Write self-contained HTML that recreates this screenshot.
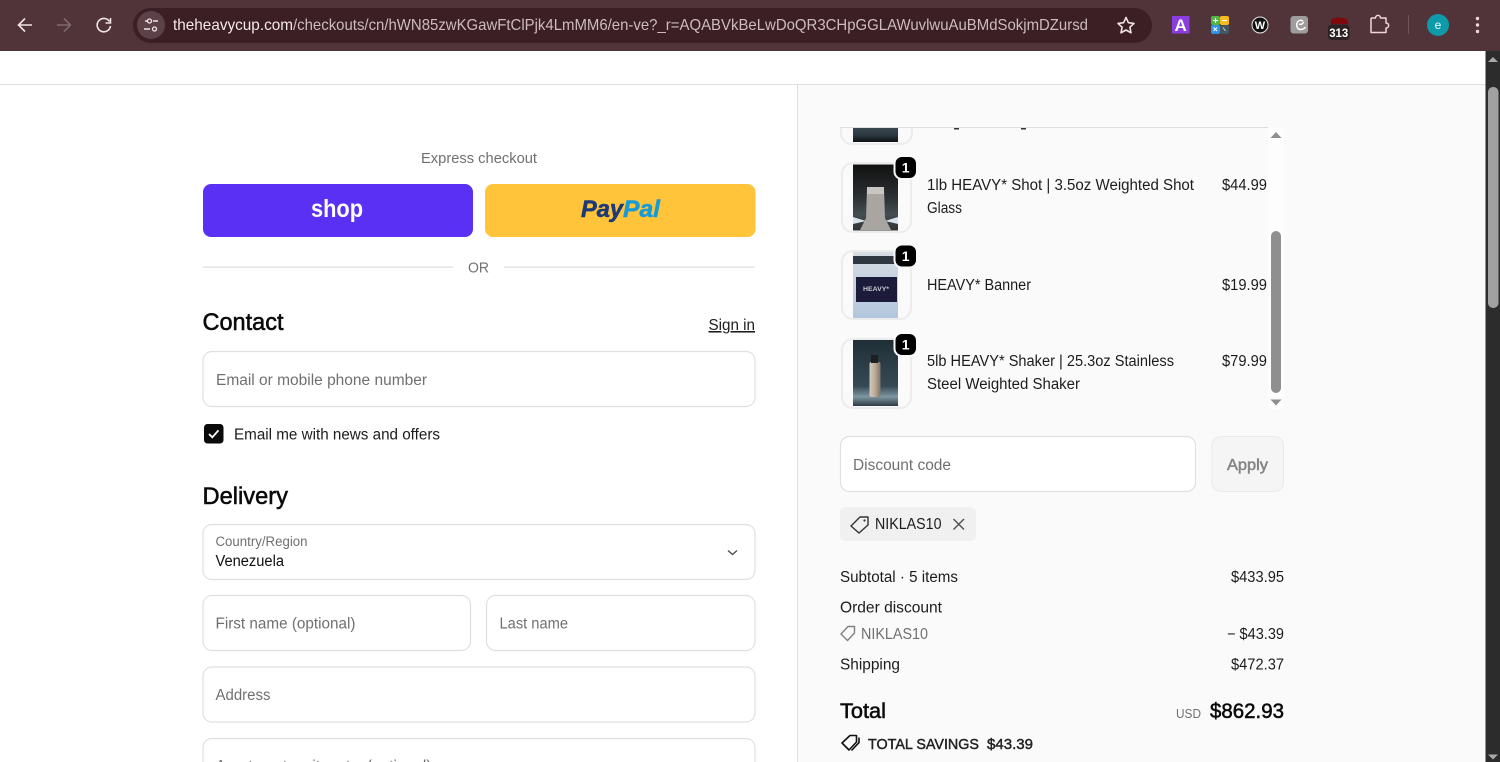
<!DOCTYPE html>
<html lang="en"><head><meta charset="utf-8"><title>Checkout</title>
<style>
html,body{margin:0;padding:0;width:1500px;height:762px;overflow:hidden;background:#fff}
svg{display:block}
text{font-family:"Liberation Sans",sans-serif;font-size:15.500px;fill:#1c1c1c;white-space:pre}
.g{fill:#707070}
.b{fill:#0a0a0a;stroke:#0a0a0a;stroke-width:.55px}
.f{fill:#fff;stroke:#e0e0e0;stroke-width:1.200}
</style></head><body>
<svg width="1500" height="762" viewBox="0 0 1500 762" xmlns="http://www.w3.org/2000/svg">
<defs>
<linearGradient id="i1" x1="0" y1="0" x2="0" y2="1"><stop offset="0" stop-color="#111"/><stop offset=".5" stop-color="#2b3033"/><stop offset=".75" stop-color="#454d52"/><stop offset="1" stop-color="#2f3336"/></linearGradient>
<linearGradient id="i2" x1="0" y1="0" x2="0" y2="1"><stop offset="0" stop-color="#d6dce2"/><stop offset="1" stop-color="#b2c7de"/></linearGradient>
<linearGradient id="i3" x1="0" y1="0" x2="0" y2="1"><stop offset="0" stop-color="#1f2e36"/><stop offset=".7" stop-color="#364a54"/><stop offset=".86" stop-color="#7f97a2"/><stop offset="1" stop-color="#2c3a42"/></linearGradient>
<linearGradient id="i0" x1="0" y1="0" x2="0" y2="1"><stop offset="0" stop-color="#4a5a62"/><stop offset=".7" stop-color="#2d3a41"/><stop offset="1" stop-color="#0e1214"/></linearGradient>
<linearGradient id="s" x1="0" y1="0" x2="1" y2="0"><stop offset="0" stop-color="#d0cbc4"/><stop offset=".5" stop-color="#bcaa94"/><stop offset="1" stop-color="#7e7468"/></linearGradient>
</defs>

<!-- page -->
<rect width="1500" height="762" fill="#fff"/>
<rect x="798" y="85" width="688" height="677" fill="#fafafa"/>
<rect x="0" y="84" width="1486" height="1" fill="#dedede"/>
<rect x="797" y="85" width="1" height="677" fill="#dedede"/>

<!-- browser toolbar -->
<rect width="1500" height="51" fill="#50343a"/>
<path d="M32 25H19M25 18.500l-6.500 6.500 6.500 6.500" fill="none" stroke="#f0e4e6" stroke-width="1.600"/>
<path d="M57 25H70M64 18.500l6.500 6.500-6.500 6.500" fill="none" stroke="#7f686c" stroke-width="1.600"/>
<path d="M109.500 21.500A6.700 6.700 0 1 0 110.500 26M110.500 18v5h-5" fill="none" stroke="#f0e4e6" stroke-width="1.600"/>
<rect x="133" y="8" width="1019" height="35" rx="17.500" fill="#3b1f25"/>
<circle cx="151" cy="25" r="14" fill="#5c4248"/>
<path d="M145 21h2M153 21h5M144 29h6" stroke="#f0e4e6" stroke-width="1.500" fill="none"/>
<circle cx="149.500" cy="21" r="2" fill="none" stroke="#f0e4e6" stroke-width="1.300"/>
<circle cx="154.500" cy="29" r="2" fill="none" stroke="#f0e4e6" stroke-width="1.300"/>
<text x="173" y="30" textLength="120" lengthAdjust="spacingAndGlyphs" style="fill:#f3e8ea;font-size:16px">theheavycup.com</text>
<text x="293" y="30" textLength="795" lengthAdjust="spacingAndGlyphs" style="fill:#cdbcbf;font-size:16px">/checkouts/cn/hWN85zwKGawFtClPjk4LmMM6/en-ve?_r=AQABVkBeLwDoQR3CHpGGLAWuvlwuAuBMdSokjmDZursd</text>
<path d="M1126 17.500l2.400 5.200 5.600.700-4.100 3.800 1.100 5.600-5-2.800-5 2.800 1.100-5.600-4.100-3.800 5.600-.700z" fill="none" stroke="#f0e4e6" stroke-width="1.600" stroke-linejoin="round"/>

<rect x="1172" y="16" width="17.500" height="17.500" fill="#8b3ee0"/>
<text x="1180.700" y="31" text-anchor="middle" style="font-size:17px;font-weight:700;fill:#fff">A</text>
<rect x="1211" y="16" width="9" height="9" rx="2" fill="#54b447"/><rect x="1220" y="16" width="9" height="9" rx="2" fill="#f9bb1c"/>
<rect x="1211" y="25" width="9" height="9" rx="2" fill="#2f93e6"/><rect x="1220" y="25" width="9" height="9" rx="2" fill="#45565e"/>
<path d="M1213 20.500h5M1215.500 18v5M1222 20.500h5M1213.500 27.500l3.500 3.500M1217 27.500l-3.500 3.500" stroke="#fff" stroke-width="1.100"/>
<path d="M1223 27.500l2.500 3.500" stroke="#c7d2d6" stroke-width="1"/>
<circle cx="1260" cy="25" r="8" fill="#111" stroke="#e8e8e8" stroke-width="1"/>
<text x="1260" y="29" text-anchor="middle" style="font-size:11px;font-weight:700;fill:#fff">W</text>
<rect x="1290.500" y="16" width="17.500" height="17.500" rx="3" fill="#9d9d9d"/>
<path d="M1303 21.500c-1-2-5-1.500-6 1.500s.5 6.500 3.500 6.500 4-1 5-2.500M1299 24c2 .8 4 0 4.500-2" fill="none" stroke="#fff" stroke-width="1.400"/>
<path d="M1331 24v-2.500c0-2.500 1.500-3.500 4-3.500h1c1-1.500 3-1.500 4 0h3c3 0 5 1 5 3.500v2.500z" fill="#7e0a10"/>
<rect x="1328" y="24.500" width="21.500" height="15.500" rx="4" fill="#2c2224"/>
<text x="1338.700" y="37" text-anchor="middle" textLength="19" lengthAdjust="spacingAndGlyphs" style="font-size:11.500px;font-weight:700;fill:#fff">313</text>
<path d="M1372 18h4.500c0-3.500 5-3.500 5 0h5.500v5c3.500 0 3.500 5 0 5v4.500h-15v-4.500" fill="none" stroke="#eed6da" stroke-width="1.500" stroke-linejoin="round" transform="translate(-1 0)"/>
<path d="M1371 18v10" stroke="#eed6da" stroke-width="1.500"/>
<rect x="1408" y="15" width="1" height="19" fill="#6f5459"/>
<circle cx="1438" cy="25" r="11" fill="#0e9aa9"/>
<text x="1438" y="29" text-anchor="middle" style="font-size:12px;fill:#eafcff">e</text>
<circle cx="1477.500" cy="18.500" r="1.700" fill="#eed6da"/><circle cx="1477.500" cy="25" r="1.700" fill="#eed6da"/><circle cx="1477.500" cy="31.500" r="1.700" fill="#eed6da"/>

<!-- page scrollbar -->
<rect x="1485.500" y="51" width="14.500" height="711" fill="#2c2c2c"/>
<path d="M1493 57l5 5h-10z" fill="#a8a8a8"/>
<path d="M1493 759.500l5-5h-10z" fill="#a8a8a8"/>
<rect x="1488" y="87" width="10.500" height="221" rx="5" fill="#a1a1a1"/>

<!-- express -->
<text x="421" y="163" textLength="116" lengthAdjust="spacingAndGlyphs" class="g" style="font-size:15px">Express checkout</text>
<rect x="203" y="184" width="270" height="53" rx="8" fill="#5a31f4"/>
<text x="311" y="217" textLength="52" lengthAdjust="spacingAndGlyphs" style="font-size:25px;font-weight:700;fill:#fff">shop</text>
<rect x="485" y="184" width="270.500" height="53" rx="8" fill="#ffc439"/>
<text x="581" y="217" textLength="42" lengthAdjust="spacingAndGlyphs" style="font-size:24px;font-weight:700;font-style:italic;fill:#1c3a78;stroke:#1c3a78;stroke-width:.5px">Pay</text>
<text x="623" y="217" textLength="37" lengthAdjust="spacingAndGlyphs" style="font-size:24px;font-weight:700;font-style:italic;fill:#179bd7;stroke:#179bd7;stroke-width:.5px">Pal</text>
<rect x="203" y="266.500" width="250" height="1.200" fill="#dedede"/>
<rect x="504" y="266.500" width="251" height="1.200" fill="#dedede"/>
<text x="468" y="272.500" textLength="21" lengthAdjust="spacingAndGlyphs" class="g" style="font-size:15px">OR</text>

<!-- contact -->
<text x="202.500" y="330" textLength="81" lengthAdjust="spacingAndGlyphs" class="b" style="font-size:24px">Contact</text>
<text x="708.500" y="330" textLength="46.500" lengthAdjust="spacingAndGlyphs" style="text-decoration:underline">Sign in</text>
<rect class="f" x="203" y="351.500" width="552" height="55" rx="9"/>
<text x="216" y="385" textLength="211" lengthAdjust="spacingAndGlyphs" class="g">Email or mobile phone number</text>
<rect x="204" y="424" width="19.500" height="19.500" rx="3.500" fill="#0a0a0a"/>
<path d="M209 434l3.300 3.300 6.200-7" fill="none" stroke="#fff" stroke-width="1.800"/>
<text x="234" y="439.500" textLength="206" lengthAdjust="spacingAndGlyphs">Email me with news and offers</text>

<!-- delivery -->
<text x="202.500" y="504" textLength="85.500" lengthAdjust="spacingAndGlyphs" class="b" style="font-size:24px">Delivery</text>
<rect class="f" x="203" y="524.500" width="552" height="55" rx="9"/>
<text x="215.500" y="546" textLength="92" lengthAdjust="spacingAndGlyphs" class="g" style="font-size:13.500px">Country/Region</text>
<text x="215.500" y="566" textLength="68.500" lengthAdjust="spacingAndGlyphs" style="fill:#0f0f0f">Venezuela</text>
<path d="M728 550.500l4.500 4 4.500-4" fill="none" stroke="#555" stroke-width="1.500"/>
<rect class="f" x="203" y="595.500" width="267.500" height="55" rx="9"/>
<text x="215.500" y="628.500" textLength="140" lengthAdjust="spacingAndGlyphs" class="g">First name (optional)</text>
<rect class="f" x="486.500" y="595.500" width="268.500" height="55" rx="9"/>
<text x="499.500" y="628.500" textLength="68.500" lengthAdjust="spacingAndGlyphs" class="g">Last name</text>
<rect class="f" x="203" y="667" width="552" height="55" rx="9"/>
<text x="215.500" y="700" textLength="55" lengthAdjust="spacingAndGlyphs" class="g">Address</text>
<rect class="f" x="203" y="738.500" width="552" height="55" rx="9"/>
<text x="215.500" y="771" textLength="216" lengthAdjust="spacingAndGlyphs" class="g">Apartment, suite, etc. (optional)</text>

<!-- order list -->
<rect x="1268" y="128" width="16" height="281" fill="#fdfdfd"/>
<rect x="841" y="120" width="71" height="24" rx="11" fill="#fafafa" stroke="#ececec" stroke-width="2"/>
<rect x="853" y="118" width="45" height="24" fill="url(#i0)"/>
<rect x="798" y="100" width="486" height="27.500" fill="#fafafa"/>
<rect x="840" y="127" width="428" height="1" fill="#dedede"/>
<rect x="954" y="128" width="5" height="1.500" fill="#333"/>
<rect x="1021" y="128" width="5" height="1.500" fill="#333"/>
<path d="M1276 132l5.500 6h-11z" fill="#8f8f8f"/>
<path d="M1276 405.500l5.500-6h-11z" fill="#8f8f8f"/>
<rect x="1271" y="231" width="10" height="162" rx="5" fill="#8f8f8f"/>

<!-- item 1 -->
<rect x="842" y="163" width="69" height="69" rx="11" fill="#fafafa" stroke="#ececec" stroke-width="2"/>
<rect x="853" y="164.500" width="45" height="66" fill="url(#i1)"/>
<path d="M853 217l13 4-13 3zM898 217l-13 4 13 3z" fill="#d8e2e8"/>
<path d="M867 188h17l1 30 6 12h-31l6-12z" fill="#a9a5a1"/>
<rect x="867" y="187" width="17" height="7" fill="#c9c6c2"/>
<rect x="894.500" y="156" width="22.500" height="23" rx="7.500" fill="#000" stroke="#fafafa" stroke-width="2"/>
<text x="905.700" y="172.500" text-anchor="middle" style="font-size:14px;font-weight:700;fill:#fff">1</text>
<text x="927" y="190" textLength="267" lengthAdjust="spacingAndGlyphs">1lb HEAVY* Shot | 3.5oz Weighted Shot</text>
<text x="927" y="213" textLength="35" lengthAdjust="spacingAndGlyphs">Glass</text>
<text x="1222" y="190" textLength="45" lengthAdjust="spacingAndGlyphs">$44.99</text>

<!-- item 2 -->
<rect x="842" y="251" width="69" height="68" rx="11" fill="#fafafa" stroke="#ececec" stroke-width="2"/>
<rect x="853" y="252" width="45" height="66" fill="url(#i2)"/>
<rect x="853" y="256" width="45" height="8" fill="#2f3740"/>
<rect x="856" y="277" width="41" height="25" fill="#1c1c3a"/>
<text x="876" y="291" text-anchor="middle" textLength="26" lengthAdjust="spacingAndGlyphs" style="font-size:6px;font-weight:700;fill:#c9cbd6">HEAVY*</text>
<rect x="894.500" y="244.500" width="22.500" height="23" rx="7.500" fill="#000" stroke="#fafafa" stroke-width="2"/>
<text x="905.700" y="261" text-anchor="middle" style="font-size:14px;font-weight:700;fill:#fff">1</text>
<text x="927" y="290" textLength="104" lengthAdjust="spacingAndGlyphs">HEAVY* Banner</text>
<text x="1222" y="290" textLength="45" lengthAdjust="spacingAndGlyphs">$19.99</text>

<!-- item 3 -->
<rect x="842" y="339" width="69" height="69" rx="11" fill="#fafafa" stroke="#ececec" stroke-width="2"/>
<rect x="853" y="340" width="45" height="66" fill="url(#i3)"/>
<rect x="869.500" y="362" width="11" height="35" rx="2" fill="url(#s)"/>
<rect x="871" y="355" width="7" height="8" fill="#1d1f20"/>
<rect x="894.500" y="333" width="22.500" height="23" rx="7.500" fill="#000" stroke="#fafafa" stroke-width="2"/>
<text x="905.700" y="349.500" text-anchor="middle" style="font-size:14px;font-weight:700;fill:#fff">1</text>
<text x="927" y="366" textLength="247" lengthAdjust="spacingAndGlyphs">5lb HEAVY* Shaker | 25.3oz Stainless</text>
<text x="927" y="389" textLength="153" lengthAdjust="spacingAndGlyphs">Steel Weighted Shaker</text>
<text x="1222" y="366" textLength="45" lengthAdjust="spacingAndGlyphs">$79.99</text>

<!-- discount -->
<rect class="f" x="840.500" y="436.500" width="355" height="55" rx="9"/>
<text x="853" y="470" textLength="98" lengthAdjust="spacingAndGlyphs" class="g">Discount code</text>
<rect x="1212" y="436.500" width="71.500" height="55" rx="9" fill="#f5f5f5" stroke="#ebebeb"/>
<text x="1227" y="470" textLength="41" lengthAdjust="spacingAndGlyphs" style="fill:#858585;stroke:#858585;stroke-width:.5px">Apply</text>
<rect x="840" y="507" width="136" height="34" rx="6" fill="#f0f0f0"/>
<path d="M851 526l9-9h8v8l-9 8z" fill="none" stroke="#333" stroke-width="1.400" stroke-linejoin="round"/>
<circle cx="864.500" cy="520.500" r="1.100" fill="#333"/>
<text x="875" y="529" textLength="66.500" lengthAdjust="spacingAndGlyphs">NIKLAS10</text>
<path d="M953.500 519l10.500 10.500M964 519l-10.500 10.500" stroke="#555" stroke-width="1.500"/>

<!-- totals -->
<text x="840" y="582" textLength="118" lengthAdjust="spacingAndGlyphs">Subtotal · 5 items</text>
<text x="1231" y="582" textLength="53" lengthAdjust="spacingAndGlyphs">$433.95</text>
<text x="840" y="612.500" textLength="102" lengthAdjust="spacingAndGlyphs">Order discount</text>
<path d="M841 634l7-7.500h6.500v6.500l-7 7.500z" fill="none" stroke="#808080" stroke-width="1.400" stroke-linejoin="round"/>
<text x="861" y="639" textLength="67" lengthAdjust="spacingAndGlyphs" class="g">NIKLAS10</text>
<text x="1227" y="639" textLength="57" lengthAdjust="spacingAndGlyphs">− $43.39</text>
<text x="840" y="669.500" textLength="60" lengthAdjust="spacingAndGlyphs">Shipping</text>
<text x="1231" y="669.500" textLength="53" lengthAdjust="spacingAndGlyphs">$472.37</text>
<text x="840" y="718" textLength="46" lengthAdjust="spacingAndGlyphs" class="b" style="font-size:21.500px">Total</text>
<text x="1176" y="718" textLength="25" lengthAdjust="spacingAndGlyphs" class="g" style="font-size:13px">USD</text>
<text x="1210" y="718" textLength="74" lengthAdjust="spacingAndGlyphs" class="b" style="font-size:21.500px">$862.93</text>
<path d="M842 743l8-7.500h6.500v6.500l-7.500 8z" fill="none" stroke="#111" stroke-width="1.600" stroke-linejoin="round"/>
<path d="M859 737.500v5l-7.500 8" fill="none" stroke="#111" stroke-width="1.600"/>
<text x="868" y="749" textLength="111" lengthAdjust="spacingAndGlyphs" style="font-size:15px;fill:#222;stroke:#222;stroke-width:.45px">TOTAL SAVINGS</text>
<text x="987" y="749" textLength="46" lengthAdjust="spacingAndGlyphs" style="font-size:15px;fill:#222;stroke:#222;stroke-width:.45px">$43.39</text>
</svg>
</body></html>
